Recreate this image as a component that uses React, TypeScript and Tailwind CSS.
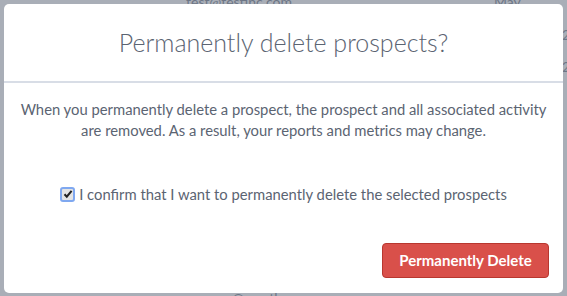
import React, { useState } from 'react';

const App: React.FC = () => {
  const [confirmed, setConfirmed] = useState(true);

  return (
    <div className="relative w-[567px] h-[296px] overflow-hidden bg-[#a9aeb7] font-['Lato','Liberation_Sans',sans-serif]">
      {/* Page behind the backdrop */}
      <div className="absolute inset-0 text-[14px] text-[#6d7686] pointer-events-none">
        <span className="absolute left-[186px] top-[-9px]">test@testinc.com</span>
        <span className="absolute left-[494px] top-[-9px]">May</span>
        <span className="absolute left-[562px] top-[24px]">2</span>
        <span className="absolute left-[562px] top-[56px]">2</span>
        <span className="absolute left-[196px] top-[287px]">zoe.m@weather.com</span>
      </div>

      {/* Modal */}
      <div className="relative pt-[4px] pl-[4px]">
        <div className="w-[559px] h-[289px] bg-white rounded-[5px] flex flex-col">
          <div className="h-[77px] flex items-center justify-center">
            <h2 className="text-[25px] font-light text-[#5b6472]">Permanently delete prospects?</h2>
          </div>
          <div className="h-[2px] bg-[#d8dde6]" />

          <div className="flex-1 flex flex-col px-2 pt-[16px]">
            <p className="text-center text-[14.8px] leading-[21px] text-[#5b6472] whitespace-nowrap">
              When you permanently delete a prospect, the prospect and all associated activity
              <br />
              are removed. As a result, your reports and metrics may change.
            </p>

            <label className="mt-[43px] flex items-center justify-center gap-[4px] text-[14.8px] leading-[20px] text-[#5b6472] cursor-pointer">
              <span
                onClick={() => setConfirmed(!confirmed)}
                className="w-[15px] h-[15px] rounded-[3px] border-2 border-[#7fa8f0] bg-[#e4e4e4] flex items-center justify-center"
              >
                {confirmed && (
                  <svg className="w-[10px] h-[10px]" viewBox="0 0 10 10">
                    <path d="M1.5 5.2l2.3 2.5L8.6 1.8" fill="none" stroke="#222" strokeWidth={2} />
                  </svg>
                )}
              </span>
              <span>I confirm that I want to permanently delete the selected prospects</span>
            </label>

            <div className="mt-auto mb-[15px] flex justify-end">
              <button className="w-[167px] h-[35px] mr-[6px] rounded-[4px] bg-[#d9504a] border border-[#b8372f] text-white text-[15px] font-bold">
                Permanently Delete
              </button>
            </div>
          </div>
        </div>
      </div>
    </div>
  );
};

export default App;
